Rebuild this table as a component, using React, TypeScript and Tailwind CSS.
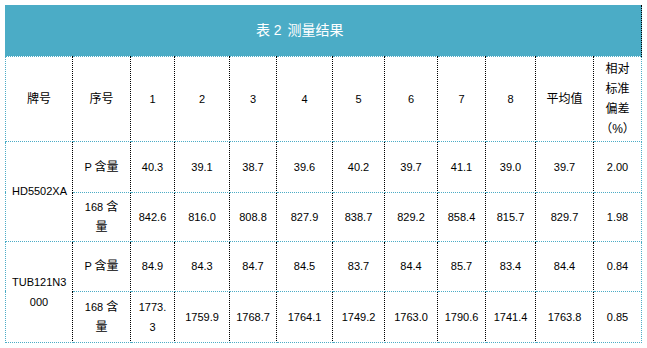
const cols = [67, 58, 44, 55, 47, 56, 52, 53, 48, 50, 58, 48];

interface IRow {
  label: React.ReactNode;
  values: React.ReactNode[];
  avg: string;
  rsd: string;
  h: number;
}

const Zh = ({ children }: { children: React.ReactNode }) => (
  <span className="text-[12px]">{children}</span>
);

const groups: { name: React.ReactNode; rows: IRow[] }[] = [
  {
    name: "HD5502XA",
    rows: [
      {
        label: (
          <>
            P <Zh>含量</Zh>
          </>
        ),
        values: ["40.3", "39.1", "38.7", "39.6", "40.2", "39.7", "41.1", "39.0"],
        avg: "39.7",
        rsd: "2.00",
        h: 51,
      },
      {
        label: (
          <>
            168 <Zh>含</Zh>
            <br />
            <Zh>量</Zh>
          </>
        ),
        values: ["842.6", "816.0", "808.8", "827.9", "838.7", "829.2", "858.4", "815.7"],
        avg: "829.7",
        rsd: "1.98",
        h: 49,
      },
    ],
  },
  {
    name: (
      <>
        TUB121N3
        <br />
        000
      </>
    ),
    rows: [
      {
        label: (
          <>
            P <Zh>含量</Zh>
          </>
        ),
        values: ["84.9", "84.3", "84.7", "84.5", "83.7", "84.4", "85.7", "83.4"],
        avg: "84.4",
        rsd: "0.84",
        h: 50,
      },
      {
        label: (
          <>
            168 <Zh>含</Zh>
            <br />
            <Zh>量</Zh>
          </>
        ),
        values: [
          <>
            1773.
            <br />3
          </>,
          "1759.9",
          "1768.7",
          "1764.1",
          "1749.2",
          "1763.0",
          "1790.6",
          "1741.4",
        ],
        avg: "1763.8",
        rsd: "0.85",
        h: 51,
      },
    ],
  },
];

// inner cells: blue solid top/bottom, dotted black sides
const cell =
  "border-y border-y-[#4BACC6] border-x border-x-black border-dotted border-y-solid px-[6px] py-0 text-center align-middle whitespace-nowrap";

const App = () => {
  return (
    <div
      className="w-[647px] h-[348px] bg-white p-[5px] text-black text-[11px] leading-[20px]"
      style={{ fontFamily: '"Liberation Sans", "Noto Sans CJK SC", sans-serif' }}
    >
      <table className="table-fixed border-collapse w-[637px]">
        <colgroup>
          {cols.map((w, i) => (
            <col key={i} style={{ width: w }} />
          ))}
        </colgroup>
        <tbody>
          <tr>
            <td
              colSpan={11}
              className="h-[51px] bg-[#4BACC6] text-white text-center align-middle border-l border-solid border-l-[#4BACC6] p-0"
            >
              <span className="text-[14px]">
                表 2<span className="ml-[6px]">测量结果</span>
              </span>
            </td>
            <td className="bg-[#4BACC6] border-r border-dotted border-r-black p-0" />
          </tr>
          <tr>
            <td className={`${cell} h-[85px] !border-l-solid !border-l-[#4BACC6]`}>
              <Zh>牌号</Zh>
            </td>
            <td className={`${cell} h-[85px]`}>
              <Zh>序号</Zh>
            </td>
            {[1, 2, 3, 4, 5, 6, 7, 8].map((n) => (
              <td key={n} className={`${cell} h-[85px]`}>
                {n}
              </td>
            ))}
            <td className={`${cell} h-[85px]`}>
              <Zh>平均值</Zh>
            </td>
            <td
              className={`${cell} h-[85px] !border-x-solid !border-x-[#4BACC6]`}
            >
              <Zh>
                相对
                <br />
                标准
                <br />
                偏差
                <br />
                （%）
              </Zh>
            </td>
          </tr>
          {groups.map((g, gi) =>
            g.rows.map((r, ri) => (
              <tr key={`${gi}-${ri}`}>
                {ri === 0 && (
                  <td
                    rowSpan={2}
                    className={`${cell} !border-l-solid !border-l-[#4BACC6]`}
                  >
                    {g.name}
                  </td>
                )}
                <td className={cell} style={{ height: r.h }}>
                  {r.label}
                </td>
                {r.values.map((v, vi) => (
                  <td key={vi} className={cell}>
                    {v}
                  </td>
                ))}
                <td className={cell}>{r.avg}</td>
                <td className={`${cell} !border-x-solid !border-x-[#4BACC6]`}>
                  {r.rsd}
                </td>
              </tr>
            ))
          )}
        </tbody>
      </table>
    </div>
  );
};

export default App;
